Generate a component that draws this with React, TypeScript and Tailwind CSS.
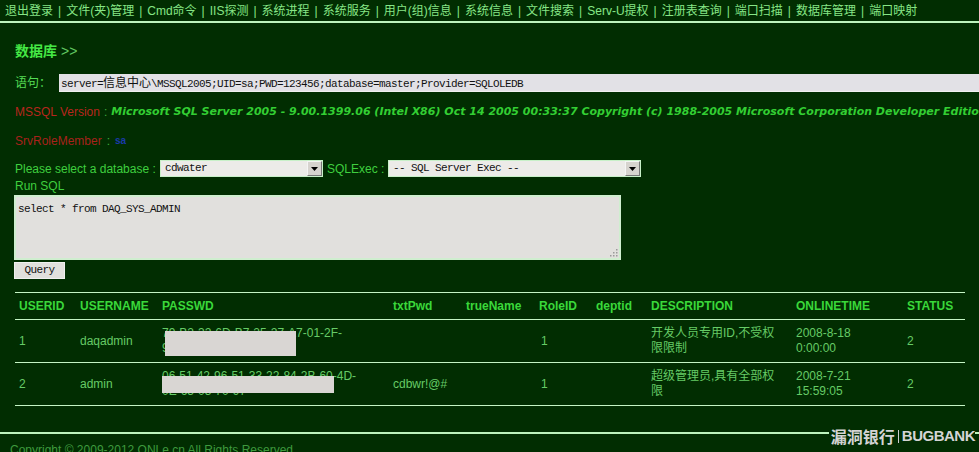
import React from "react";

const navItems = [
  "退出登录",
  "文件(夹)管理",
  "Cmd命令",
  "IIS探测",
  "系统进程",
  "系统服务",
  "用户(组)信息",
  "系统信息",
  "文件搜索",
  "Serv-U提权",
  "注册表查询",
  "端口扫描",
  "数据库管理",
  "端口映射",
];

const cols = "grid grid-cols-[61px_82px_231px_73px_73px_57px_55px_145px_111px_62px]";

function Arrow() {
  return (
    <div className="flex h-[15px] w-[15px] items-center justify-center border border-[#f4f4f4] border-r-[#777] border-b-[#777] bg-[#d6d3ce]">
      <svg width="7" height="4" viewBox="0 0 7 4">
        <polygon points="0,0 7,0 3.5,4" fill="#000" />
      </svg>
    </div>
  );
}

function FakeSelect({ text, w }: { text: string; w: string }) {
  return (
    <div className={`flex h-[17px] items-center justify-between border border-[#c8f0c8] bg-[#ecebe8] pl-[4px] pr-[0px] ${w}`}>
      <span className="font-['Liberation_Mono',monospace] text-[11px] tracking-[-0.6px] text-[#111]">{text}</span>
      <Arrow />
    </div>
  );
}

export default function App() {
  return (
    <div className="relative h-[452px] w-[979px] overflow-hidden bg-[#012d01] font-['Liberation_Sans','Noto_Sans_CJK_SC',sans-serif] text-[12px]">
      {/* nav */}
      <div className="flex h-[21px] items-center whitespace-nowrap pl-[5px] text-[12px] text-[#86e686]">
        {navItems.map((n, i) => (
          <React.Fragment key={n}>
            {i > 0 && <span className="px-[5px]">|</span>}
            <span>{n}</span>
          </React.Fragment>
        ))}
      </div>
      <div className="h-[2px] bg-[#bdf3bd]" />

      <div className="pl-[15px]">
        {/* heading */}
        <div className="mt-[20px] flex h-[16px] items-center leading-[16px]">
          <span className="text-[14px] font-bold text-[#45e845]">数据库</span>
          <span className="ml-[4px] text-[14px] text-[#62c862]">&gt;&gt;</span>
        </div>

        {/* statement */}
        <div className="mt-[15px] flex h-[18px] items-center">
          <span className="w-[44px] text-[12px] text-[#55dd55]">语句：</span>
          <div className="flex h-[18px] flex-1 items-center border-b border-[#f0f0f0] bg-[#e2e1e6] pl-[2px]">
            <span className="whitespace-nowrap font-['Liberation_Mono',monospace] text-[11px] tracking-[-0.6px] text-[#111]">
              server=<span className="font-['Noto_Sans_CJK_SC',sans-serif] text-[12px] tracking-[0px]">信息中心</span>\MSSQL2005;UID=sa;PWD=123456;database=master;Provider=SQLOLEDB
            </span>
          </div>
        </div>

        {/* version */}
        <div className="mt-[12px] flex h-[16px] items-center whitespace-nowrap">
          <span className="text-[#b8261e]">MSSQL Version</span>
          <span className="mx-[4px] text-[#3fae3f]">:</span>
          <span className="font-['DejaVu_Sans',sans-serif] text-[11px] font-bold italic text-[#33cf33]">
            Microsoft SQL Server 2005 - 9.00.1399.06 (Intel X86) Oct 14 2005 00:33:37 Copyright (c) 1988-2005 Microsoft Corporation Developer Edition
          </span>
        </div>

        {/* role */}
        <div className="mt-[13px] flex h-[16px] items-center">
          <span className="text-[#a8221c]">SrvRoleMember</span>
          <span className="mx-[5px] text-[#3fae3f]">:</span>
          <span className="text-[10px] font-bold leading-[8px] text-[#1a3aa8]">sa</span>
        </div>

        {/* select row */}
        <div className="mt-[11px] flex h-[17px] items-center">
          <span className="w-[145px] whitespace-nowrap text-[#3fcf3f]">Please select a database :</span>
          <FakeSelect text="cdwater" w="w-[163px]" />
          <span className="ml-[4px] w-[61px] whitespace-nowrap text-[#3fcf3f]">SQLExec :</span>
          <FakeSelect text="-- SQL Server Exec --" w="w-[253px]" />
        </div>

        {/* run sql */}
        <div className="mt-[2px] flex h-[14px] items-center text-[#3fcf3f]">Run SQL</div>

        <div className="relative ml-[-1px] mt-[2px] h-[65px] w-[607px] border-2 border-[#cfeecf] bg-[#e1e0dd] pl-[2px] pt-[2px]">
          <span className="font-['Liberation_Mono',monospace] text-[11px] tracking-[-0.6px] text-[#111]">select * from DAQ_SYS_ADMIN</span>
          <svg className="absolute bottom-[1px] right-[1px]" width="9" height="9" viewBox="0 0 9 9">
            <rect x="7" y="1" width="1.5" height="1.5" fill="#9a9a9a" />
            <rect x="4" y="4" width="1.5" height="1.5" fill="#9a9a9a" />
            <rect x="7" y="4" width="1.5" height="1.5" fill="#9a9a9a" />
            <rect x="1" y="7" width="1.5" height="1.5" fill="#9a9a9a" />
            <rect x="4" y="7" width="1.5" height="1.5" fill="#9a9a9a" />
            <rect x="7" y="7" width="1.5" height="1.5" fill="#9a9a9a" />
          </svg>
        </div>

        <div className="ml-[-1px] mt-[2px] flex h-[17px] w-[51px] items-center justify-center border border-[#f0f0f0] bg-[#e1e0dd] font-['Liberation_Mono',monospace] text-[11px] tracking-[-0.6px] text-[#111]">
          Query
        </div>
      </div>

      {/* table */}
      <div className="ml-[15px] mt-[13px] w-[950px]">
        <div className={`${cols} h-[28px] items-center border-y border-[#c4f4c4] text-[12px] font-bold text-[#3ad83a]`}>
          {["USERID", "USERNAME", "PASSWD", "txtPwd", "trueName", "RoleID", "deptid", "DESCRIPTION", "ONLINETIME", "STATUS"].map((h) => (
            <div key={h} className="pl-[4px]">{h}</div>
          ))}
        </div>
        <div className={`${cols} h-[43px] items-center border-b border-[#c4f4c4] leading-[15px] text-[#66cb66]`}>
          <div className="pl-[4px]">1</div>
          <div className="pl-[4px]">daqadmin</div>
          <div className="relative h-full pl-[4px]">
            <div className="pt-[6px] whitespace-nowrap">79-B2-32-6D-B7-25-27-A7-01-2F-<br />9C-E1-0B-45-6A</div>
            <div className="absolute left-[7px] top-[11px] h-[25px] w-[131px] bg-[#d9d6d3]" />
          </div>
          <div className="pl-[4px]"></div>
          <div className="pl-[4px]"></div>
          <div className="pl-[6px]">1</div>
          <div className="pl-[4px]"></div>
          <div className="pl-[4px]">开发人员专用ID,不受权<br />限限制</div>
          <div className="pl-[4px]">2008-8-18<br />0:00:00</div>
          <div className="pl-[4px]">2</div>
        </div>
        <div className={`${cols} h-[43px] items-center border-b border-[#c4f4c4] leading-[15px] text-[#66cb66]`}>
          <div className="pl-[4px]">2</div>
          <div className="pl-[4px]">admin</div>
          <div className="relative h-full pl-[4px]">
            <div className="pt-[6px] whitespace-nowrap">06-51-42-96-51-33-22-84-2B-60-4D-<br />0E-65-05-70-97</div>
            <div className="absolute left-[4px] top-[13px] h-[17px] w-[172px] bg-[#d9d6d3]" />
          </div>
          <div className="pl-[4px]">cdbwr!@#</div>
          <div className="pl-[4px]"></div>
          <div className="pl-[6px]">1</div>
          <div className="pl-[4px]"></div>
          <div className="pl-[4px]">超级管理员,具有全部权<br />限</div>
          <div className="pl-[4px]">2008-7-21<br />15:59:05</div>
          <div className="pl-[4px]">2</div>
        </div>
      </div>

      {/* footer */}
      <div className="mt-[26px] h-[2px] bg-[#bdf3bd]" />
      <div className="mt-[7px] pl-[10px] whitespace-nowrap text-[12px] text-[#3e9a3e]">
        Copyright © 2009-2012 QNLe.cn All Rights Reserved
      </div>

      <div className="absolute right-[4px] top-[427px] flex items-center bg-[#012d01] pl-[2px] font-bold leading-[18px] text-[#d4d4d4]">
        <span className="font-['Noto_Sans_CJK_SC',sans-serif] text-[16px]">漏洞银行</span>
        <span className="mx-[3px] h-[13px] w-px bg-[#cfcfcf]" />
        <span className="font-['Liberation_Sans',sans-serif] text-[15px] tracking-[-0.5px]">BUGBANK</span>
      </div>
    </div>
  );
}
